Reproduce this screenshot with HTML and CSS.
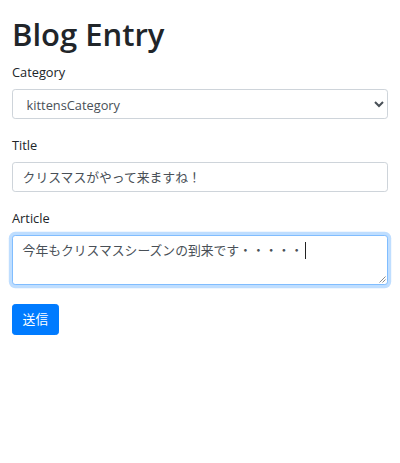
FILE: index.html
```html
<!DOCTYPE html>
<html lang="ja">
<head>
<meta charset="utf-8">
<title>Blog Entry</title>
<link rel="stylesheet" href="styles.css">
</head>
<body>
<main class="container">
  <h1 class="title">Blog Entry</h1>
  <form class="entry-form">
    <div class="form-group">
      <label class="form-label" for="category">Category</label>
      <select class="form-control form-select" id="category">
        <option>kittensCategory</option>
      </select>
    </div>
    <div class="form-group">
      <label class="form-label" for="title">Title</label>
      <input class="form-control" id="title" type="text" value="クリスマスがやって来ますね！">
    </div>
    <div class="form-group">
      <label class="form-label" for="article">Article</label>
      <div class="form-control textarea is-focused" id="article" role="textbox" aria-multiline="true">今年もクリスマスシーズンの到来です・・・・・<span class="caret"></span>
        <svg class="grip" width="8" height="8" viewBox="0 0 8 8" aria-hidden="true"><path d="M7.5 1.5 L1.5 7.5 M7.5 4.5 L4.5 7.5" stroke="#8a8a8a" stroke-width="1" fill="none"/></svg>
      </div>
    </div>
    <button class="btn-primary" type="button">送信</button>
  </form>
</main>
</body>
</html>
```
FILE: styles.css
```css
* { box-sizing: border-box; }
html, body { margin: 0; padding: 0; background: #fff; }
body {
  font-family: "Open Sans", "Noto Sans CJK JP", sans-serif;
  font-size: 12.8px;
  line-height: 1.5;
  color: #212529;
}
.container {
  padding: 12px 12px 0;
}
.title {
  margin: 0 0 12.8px;
  padding-top: 3px;
  height: 38.4px;
  font-size: 31px;
  font-weight: 600;
  line-height: 38.4px;
  color: #212529;
}
.entry-form { display: flex; flex-direction: column; align-items: stretch; }
.form-group { margin-bottom: 17px; display: flex; flex-direction: column; }
.form-label {
  display: block;
  margin-bottom: 6.4px;
  line-height: 19.2px;
}
.form-control {
  display: block;
  width: 100%;
  height: 30.4px;
  padding: 4.8px 9.6px;
  font: inherit;
  font-size: 12.8px;
  line-height: 19.2px;
  color: #495057;
  background: #fff;
  border: 1px solid #ced4da;
  border-radius: 3.2px;
  outline: none;
}
.form-select { padding-left: 9.6px; }
.textarea {
  position: relative;
  height: 50px;
  white-space: nowrap;
}
.is-focused {
  border-color: #80bdff;
  box-shadow: 0 0 0 3.2px rgba(0, 123, 255, 0.25);
}
.caret {
  display: inline-block;
  width: 1px;
  height: 17px;
  margin-left: 2px;
  vertical-align: -4px;
  background: #222;
}
.grip {
  position: absolute;
  right: 1px;
  bottom: 1px;
}
.btn-primary {
  align-self: flex-start;
  margin-top: 2px;
  height: 30.8px;
  padding: 4.8px 9.6px;
  font: inherit;
  font-size: 12.8px;
  line-height: 19.2px;
  color: #fff;
  background: #007bff;
  border: 1px solid #007bff;
  border-radius: 3.2px;
}
```
